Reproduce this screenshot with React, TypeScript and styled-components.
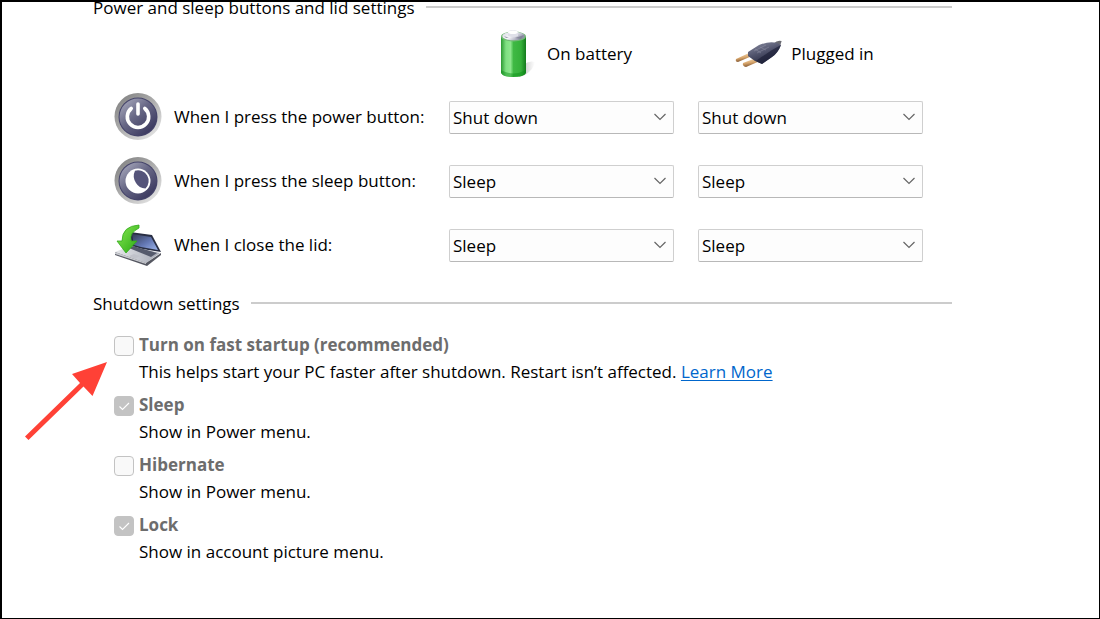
import React, { useId, useState } from "react";
import styled, { createGlobalStyle } from "styled-components";

const GlobalStyle = createGlobalStyle`
  *, *::before, *::after { box-sizing: border-box; }
  body {
    margin: 0;
    background: #fff;
    color: #000;
    font-family: "Open Sans", "Noto Sans", sans-serif;
    font-size: 17px;
    line-height: 28px;
  }
`;

const Frame = styled.main`
  position: relative;
  min-height: 100vh;
  overflow: hidden;
  border: solid #000;
  border-width: 2px 1px 1px 2px;
  padding: 0 147px 24px 91px;
`;

const Section = styled.section<{ $scrolled?: boolean }>`
  max-width: 860px;
  margin-top: ${(p) => (p.$scrolled ? "-8px" : "13px")};
`;

const Legend = styled.h2`
  display: flex;
  align-items: center;
  gap: 11px;
  margin: 0;
  font-size: 17px;
  font-weight: 400;
  white-space: nowrap;

  &::after {
    content: "";
    flex: 1;
    height: 2px;
    margin-bottom: 2px;
    background: #ccc;
  }
`;

const SourceRow = styled.div`
  display: grid;
  grid-template-columns: minmax(0, 1fr) 225px 225px;
  column-gap: 18px;
  height: 63px;
  padding-right: 35px;
`;

const Source = styled.div<{ $column: number }>`
  grid-column: ${(p) => p.$column};
  display: flex;
  align-items: center;
  justify-content: center;
  gap: 8px;
`;

const SettingRow = styled.div`
  display: grid;
  grid-template-columns: minmax(0, 1fr) 225px 225px;
  column-gap: 24px;
  align-items: center;
  height: 64px;
  padding: 0 29px 0 21px;
`;

const SettingName = styled.div`
  display: flex;
  align-items: center;
  gap: 12px;
  white-space: nowrap;
`;

const Icon = styled.svg`
  flex: none;
  width: 48px;
  height: 48px;
`;

const SelectBox = styled.div`
  display: grid;
  align-items: center;

  > * { grid-area: 1 / 1; }
`;

const Select = styled.select`
  appearance: none;
  width: 100%;
  height: 33px;
  padding: 2px 32px 0 3px;
  border: 1px solid #cfcfcf;
  border-bottom-color: #b8b8b8;
  border-radius: 2px;
  background: #fdfdfd;
  color: #000;
  font: inherit;
`;

const Chevron = styled.svg`
  justify-self: end;
  width: 14px;
  height: 8px;
  margin-right: 7px;
  pointer-events: none;
`;

const Options = styled.div`
  display: grid;
  row-gap: 6px;
  padding: 13px 0 0 21px;
`;

const Option = styled.div`
  display: grid;
  grid-template-columns: 20px 1fr;
  column-gap: 5px;
  line-height: 27px;
`;

const CheckSlot = styled.span`
  display: grid;
  align-self: center;
  margin-top: 2px;

  > * { grid-area: 1 / 1; }
`;

const Checkbox = styled.input`
  appearance: none;
  width: 20px;
  height: 20px;
  margin: 0;
  border: 1px solid #c3c3c3;
  border-radius: 4px;
  background: #f9f9f9;

  &:checked { background: #c3c3c3; }
`;

const Tick = styled.svg`
  width: 20px;
  height: 20px;
  pointer-events: none;
`;

const OptionTitle = styled.label`
  color: #6d6d6d;
  font-weight: 700;
`;

const OptionText = styled.p`
  grid-column: 2;
  margin: 0;
`;

const Link = styled.a`
  color: #0066cc;
  text-decoration: underline;
  text-decoration-thickness: 1px;
  text-underline-offset: 2px;
`;

const Pointer = styled.svg`
  position: absolute;
  left: 18px;
  top: 354px;
  width: 92px;
  height: 88px;
  pointer-events: none;
`;

function BatteryIcon() {
  return (
    <Icon viewBox="0 0 48 48" aria-hidden="true">
      <defs>
        <linearGradient id="cell" x1="0" x2="1">
          <stop offset="0" stopColor="#2c9a33" />
          <stop offset=".2" stopColor="#7fe082" />
          <stop offset=".38" stopColor="#8ce68c" />
          <stop offset=".5" stopColor="#3fb944" />
          <stop offset=".8" stopColor="#35b03a" />
          <stop offset="1" stopColor="#137a1c" />
        </linearGradient>
        <linearGradient id="cap" x1="0" x2="1" y2=".5">
          <stop offset="0" stopColor="#d4d6de" />
          <stop offset=".5" stopColor="#f7f7fb" />
          <stop offset="1" stopColor="#8d8fa5" />
        </linearGradient>
        <linearGradient id="cellShade" x1="0" x2="1">
          <stop offset="0" stopColor="#777" stopOpacity=".6" />
          <stop offset="1" stopColor="#999" stopOpacity="0" />
        </linearGradient>
      </defs>
      <path d="M28 47 L34 45 Q43 39 44 32 Q38 30 32 35Z" fill="url(#cellShade)" />
      <path d="M10 7 V43 Q12 47 22 47 Q33 47 35 43 V7Z" fill="url(#cell)" />
      <path d="M10 40 Q22 47 35 40 V43 Q33 47 22 47 Q12 47 10 43Z" fill="#0c8d17" opacity=".45" />
      <ellipse cx="22.5" cy="6.5" rx="12.5" ry="5" fill="#72b975" />
      <ellipse cx="22.5" cy="6" rx="11.3" ry="4.3" fill="url(#cap)" />
      <path d="M17 3 Q17 0 22 0 Q27 0 27 3 V6 Q22 8 17 6Z" fill="#dfe0e9" />
      <ellipse cx="22" cy="2.2" rx="4.7" ry="1.8" fill="#fff" />
      <path d="M24 8 L33 5 L30 9Z M13 6 L18 8 L15 8Z" fill="#77798f" opacity=".7" />
    </Icon>
  );
}

function PlugIcon() {
  return (
    <Icon viewBox="0 0 48 48" aria-hidden="true">
      <defs>
        <linearGradient id="plug" x1=".2" y1="0" x2=".7" y2="1">
          <stop offset="0" stopColor="#85889d" />
          <stop offset=".45" stopColor="#51546d" />
          <stop offset="1" stopColor="#1d2036" />
        </linearGradient>
        <linearGradient id="prong" x1=".3" y1="0" x2=".6" y2="1">
          <stop offset="0" stopColor="#f7e1bd" />
          <stop offset=".5" stopColor="#d8a66c" />
          <stop offset="1" stopColor="#6e4525" />
        </linearGradient>
      </defs>
      <path d="M40 15 Q43 12 46 13" fill="none" stroke="#6a6b72" strokeWidth="4" />
      <path d="M1 29 L14 23 L17 26 L3 32 Q0 32 1 29Z" fill="url(#prong)" />
      <path d="M8 33 L21 28 L25 31 L11 37 Q7 36 8 33Z" fill="url(#prong)" />
      <path d="M13 22 L24 15 Q34 11 42 13 L46 15 Q43 23 37 27 L27 34 L20 31 L13 26Z" fill="url(#plug)" />
      <path d="M25 28 L37 20 L46 15 Q43 23 37 27 L27 34 L21 31Z" fill="#1e2139" opacity=".7" />
      <path d="M19 21 L31 15 M22 23 L34 17 M20 19 L26 23 M25 17 L31 20" stroke="#9a9cb0" strokeWidth=".6" opacity=".7" />
    </Icon>
  );
}

function RoundButton({ id, children }: { id: string; children: React.ReactNode }) {
  return (
    <Icon viewBox="0 0 48 48" aria-hidden="true">
      <defs>
        <linearGradient id={`${id}Rim`} x1=".1" y1=".1" x2=".8" y2=".9">
          <stop offset="0" stopColor="#858585" />
          <stop offset=".5" stopColor="#adadad" />
          <stop offset="1" stopColor="#dedede" />
        </linearGradient>
        <linearGradient id={`${id}Face`} x1=".1" y1=".1" x2=".8" y2=".9">
          <stop offset="0" stopColor="#a1a2b7" />
          <stop offset=".45" stopColor="#686886" />
          <stop offset="1" stopColor="#3d3b61" />
        </linearGradient>
      </defs>
      <circle cx="24" cy="23.5" r="23.5" fill={`url(#${id}Rim)`} />
      <circle cx="24" cy="24" r="19.5" fill="#45446a" />
      <circle cx="24" cy="24" r="18.5" fill={`url(#${id}Face)`} />
      {children}
    </Icon>
  );
}

function PowerIcon() {
  return (
    <RoundButton id="power">
      <path d="M17.2 15.5 A10.700 10.700 0 1 0 30.800 15.500" fill="none" stroke="#fff" strokeWidth="3.600" strokeLinecap="round" />
      <path d="M24 11 V21" stroke="#fff" strokeWidth="3.600" strokeLinecap="round" />
    </RoundButton>
  );
}

function MoonIcon() {
  return (
    <RoundButton id="sleep">
      <circle cx="24" cy="24" r="12.5" fill="#fff" />
      <path d="M21 13.8 A10.6 10.6 0 0 1 31.500 31.500 Q25 31 22 26 Q18 20 21 13.800Z" fill="#55547a" />
    </RoundButton>
  );
}

function LidIcon() {
  return (
    <Icon viewBox="0 0 48 48" aria-hidden="true">
      <defs>
        <linearGradient id="screen" x1="0" x2="1" y2="1">
          <stop offset="0" stopColor="#343a52" />
          <stop offset=".55" stopColor="#6377b3" />
          <stop offset="1" stopColor="#9eb6ed" />
        </linearGradient>
        <linearGradient id="deck" x1="0" x2="1">
          <stop offset="0" stopColor="#e7e8eb" />
          <stop offset="1" stopColor="#a5a9b5" />
        </linearGradient>
        <linearGradient id="arrow" x1="0" x2="1" y2="1">
          <stop offset="0" stopColor="#8be956" />
          <stop offset="1" stopColor="#25a80f" />
        </linearGradient>
      </defs>
      <path d="M16 11 L38 14 L47 31 L28 28 L18 25Z" fill="#292e43" />
      <path d="M18 13 L37 16 L44 29 L27 26 L20 24Z" fill="url(#screen)" />
      <path d="M1 31 L16 25 L46 32 L32 42Z" fill="url(#deck)" />
      <path d="M15 27 L19 25 L43 32 L37 36Z" fill="#555a6c" />
      <path d="M1 31 L32 42 L47 32 V34 L33 45 L1 34Z" fill="#555761" />
      <path d="M1 31 L32 42 V43 L1 33Z" fill="#c9cbd0" />
      <path d="M15 35 L20 33 L26 35 L21 38Z" fill="#c0c2ca" />
      <path d="M25 4 Q8 5 8 20 L3 20 L12 32 L23 20 L17 20 Q15 12 25 7Z" fill="url(#arrow)" stroke="#33a91d" strokeWidth=".8" />
    </Icon>
  );
}

function ActionSelect({ label, initial }: { label: string; initial: string }) {
  const [value, setValue] = useState(initial);
  return (
    <SelectBox>
      <Select aria-label={label} value={value} onChange={(e) => setValue(e.target.value)}>
        <option>Do nothing</option>
        <option>Sleep</option>
        <option>Hibernate</option>
        <option>Shut down</option>
      </Select>
      <Chevron viewBox="0 0 14 8" aria-hidden="true">
        <path d="M1.5 1 L7 6.5 L12.5 1" fill="none" stroke="#666" strokeWidth="1.2" />
      </Chevron>
    </SelectBox>
  );
}

function Setting({ icon, name, action }: { icon: React.ReactNode; name: string; action: string }) {
  return (
    <SettingRow>
      <SettingName>{icon}<span>{name}</span></SettingName>
      <ActionSelect label={`${name} On battery`} initial={action} />
      <ActionSelect label={`${name} Plugged in`} initial={action} />
    </SettingRow>
  );
}

function ShutdownOption({ title, checked, children }: { title: string; checked?: boolean; children: React.ReactNode }) {
  const id = useId();
  return (
    <Option>
      <CheckSlot>
        <Checkbox id={id} type="checkbox" defaultChecked={checked} disabled />
        {checked && (
          <Tick viewBox="0 0 20 20" aria-hidden="true">
            <path d="M5.5 10.5 L8.5 13.5 L15 7" fill="none" stroke="#fff" strokeWidth="1.1" />
          </Tick>
        )}
      </CheckSlot>
      <OptionTitle htmlFor={id}>{title}</OptionTitle>
      <OptionText>{children}</OptionText>
    </Option>
  );
}

export default function App() {
  return (
    <>
      <GlobalStyle />
      <Frame>
        <Section $scrolled>
          <Legend>Power and sleep buttons and lid settings</Legend>
          <SourceRow>
            <Source $column={2}><BatteryIcon />On battery</Source>
            <Source $column={3}><PlugIcon />Plugged in</Source>
          </SourceRow>
          <Setting icon={<PowerIcon />} name="When I press the power button:" action="Shut down" />
          <Setting icon={<MoonIcon />} name="When I press the sleep button:" action="Sleep" />
          <Setting icon={<LidIcon />} name="When I close the lid:" action="Sleep" />
        </Section>
        <Section>
          <Legend>Shutdown settings</Legend>
          <Options>
            <ShutdownOption title="Turn on fast startup (recommended)">
              This helps start your PC faster after shutdown. Restart isn’t affected. <Link href="#learn-more">Learn More</Link>
            </ShutdownOption>
            <ShutdownOption title="Sleep" checked>Show in Power menu.</ShutdownOption>
            <ShutdownOption title="Hibernate">Show in Power menu.</ShutdownOption>
            <ShutdownOption title="Lock" checked>Show in account picture menu.</ShutdownOption>
          </Options>
        </Section>
        <Pointer viewBox="0 0 92 88" aria-hidden="true">
          <path d="M87 6 L52 18 L60 27 L5 80.5 L8.5 84 L63.5 30.5 L72.5 40Z" fill="#ff4136" />
        </Pointer>
      </Frame>
    </>
  );
}
